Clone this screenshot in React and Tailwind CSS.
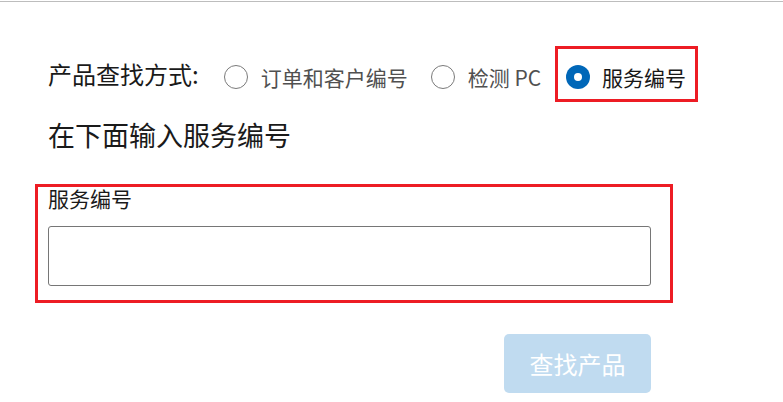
import React from "react";

function Radio({ checked }) {
  if (checked) {
    return (
      <span className="flex h-[24px] w-[24px] shrink-0 items-center justify-center rounded-full bg-[#0067b8]">
        <span className="h-[8px] w-[8px] rounded-full bg-white" />
      </span>
    );
  }
  return <span className="block h-[24px] w-[24px] shrink-0 rounded-full border border-[#7a7a7a] bg-white" />;
}

export default function App() {
  return (
    <div
      className="w-[783px] h-[402px] overflow-hidden bg-white pt-[1px]"
      style={{ fontFamily: '"Noto Sans CJK SC", "Noto Sans", sans-serif' }}
    >
      <div className="h-px w-full bg-[#bdbdbd]" />

      <div className="mt-[44px] flex h-[56px] items-center pl-[48px]">
        <span className="text-[24px] leading-[30px] text-[#1a1a1a]">产品查找方式:</span>
        <div className="ml-[25px] flex items-center pt-[5px]">
          <Radio />
          <span className="ml-[13px] text-[21px] leading-[24px] text-[#505050]">订单和客户编号</span>
        </div>
        <div className="ml-[23px] flex items-center pt-[5px]">
          <Radio />
          <span className="ml-[13px] text-[21px] leading-[24px] text-[#505050]">检测 PC</span>
        </div>
        <div className="ml-[14px] flex h-[56px] items-center border-[3px] border-[#ed1c24] pl-[8px] pr-[9px]">
          <div className="flex items-center pt-[5px]">
            <Radio checked />
            <span className="ml-[12px] text-[21px] leading-[24px] text-[#171717]">服务编号</span>
          </div>
        </div>
      </div>

      <div className="mt-[15px] pl-[48px] text-[27px] leading-[36px] text-[#1a1a1a]">在下面输入服务编号</div>

      <div className="ml-[35px] mt-[31px] w-[638px] border-[3px] border-[#ed1c24] pb-[14px] pl-[10px]">
        <div className="text-[21px] leading-[22px] text-[#1a1a1a]">服务编号</div>
        <div className="mt-[17px] h-[60px] w-[603px] rounded-[3px] border border-[#767676] bg-white" />
      </div>

      <div className="mt-[31px] flex w-[651px] justify-end">
        <div className="flex h-[59px] w-[147px] items-center justify-center rounded-[5px] bg-[#c0dbf0] text-[24px] leading-[30px] text-white">
          查找产品
        </div>
      </div>
    </div>
  );
}
